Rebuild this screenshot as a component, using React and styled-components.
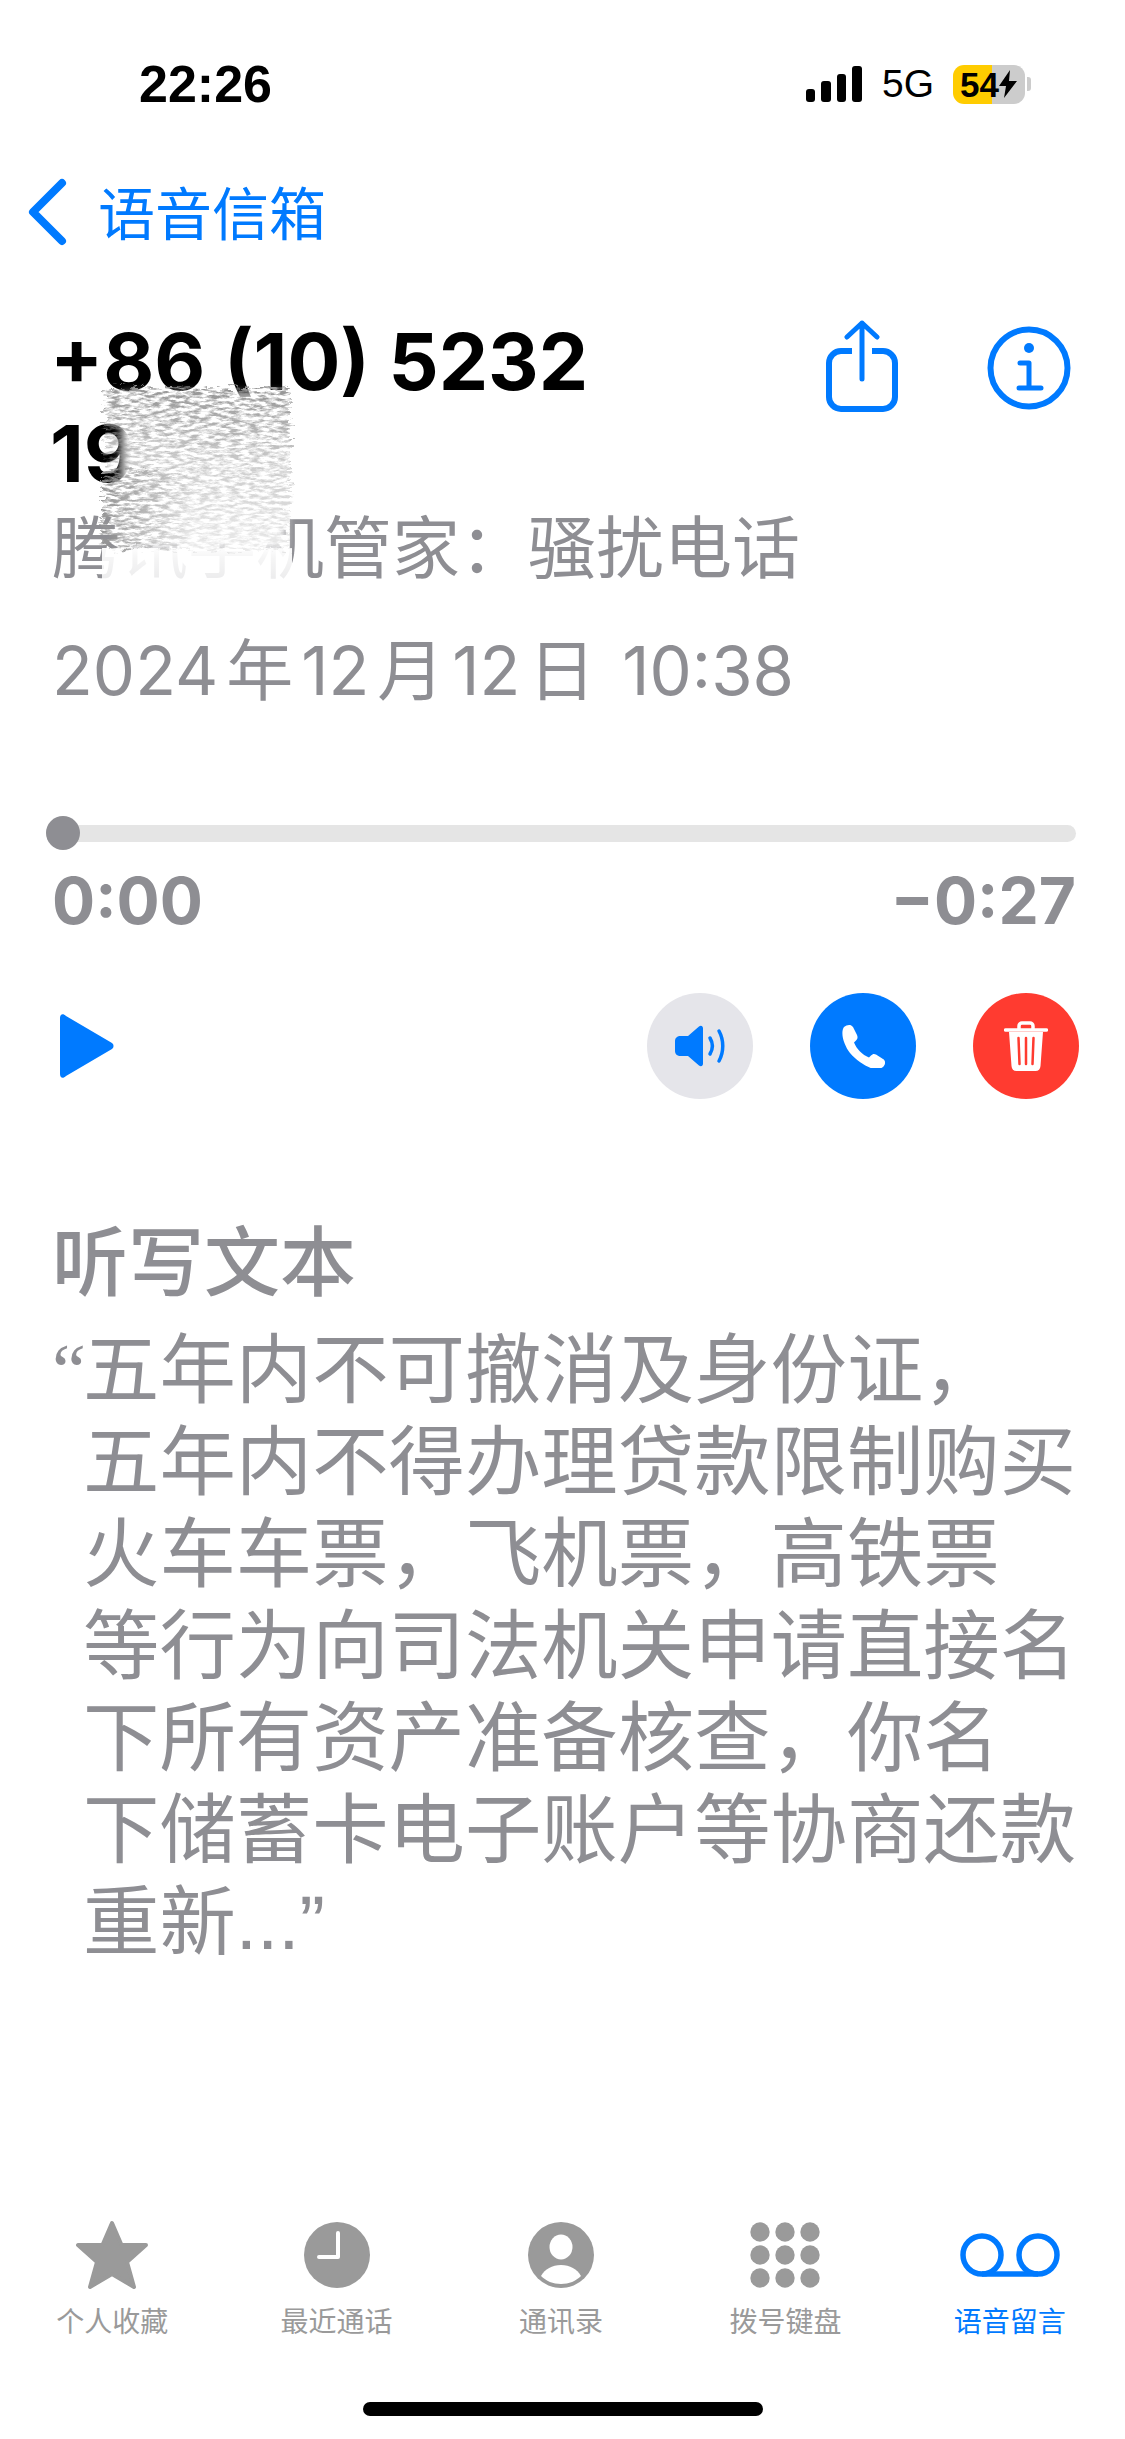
import styled, { createGlobalStyle } from "styled-components";

const GlobalStyle = createGlobalStyle`
    html, body {
        margin: 0;
        padding: 0;
        background: #fff;
    }
    body {
        font-family: "Inter", "Noto Sans CJK SC", sans-serif;
    }
`

const BLUE = "#007AFF";
const GRAY = "#8E8E93";
const CJK = `"Noto Sans CJK SC", sans-serif`;

const Screen = styled.div`
    width: 1125px;
    height: 2439px;
    display: flex;
    flex-direction: column;
    background: #fff;
    overflow: hidden;
    position: relative;
`

const StatusBar = styled.header`
    height: 40px;
    padding: 64px 94px 0 139px;
    display: flex;
    align-items: center;
    justify-content: space-between;
`

const Time = styled.span`
    font: 700 52px/40px "Liberation Sans", sans-serif;
    color: #000;
`

const StatusRight = styled.div`
    display: flex;
    align-items: center;
`

const NetworkLabel = styled.span`
    font: 400 39px/40px "Liberation Sans", sans-serif;
    margin: 0 19px 0 20px;
    color: #000;
`

const Battery = styled.div`
    width: 72px;
    height: 39px;
    border-radius: 11px;
    overflow: hidden;
    display: flex;
    align-items: center;
    background: linear-gradient(90deg, #FFCC00 0 54%, #CCCCCC 54% 100%);
    padding-left: 7px;
    box-sizing: border-box;
`

const BatteryNub = styled.div`
    width: 4px;
    height: 14px;
    margin-left: 2px;
    border-radius: 0 3px 3px 0;
    background: #CCCCCC;
`

const BatteryText = styled.span`
    font: 700 35px/39px "Liberation Sans", sans-serif;
    color: #000;
`

const NavBar = styled.nav`
    display: flex;
    align-items: center;
    gap: 30px;
    margin-top: 74px;
    padding-left: 27px;
    height: 68px;
`

const BackLabel = styled.span`
    font: 400 57px/68px ${CJK};
    color: ${BLUE};
    margin-bottom: 5px;
`

const Header = styled.section`
    display: flex;
    justify-content: space-between;
    align-items: flex-start;
    padding: 70px 54px 0 50px;
    position: relative;
`

const HeaderText = styled.div`
    display: flex;
    flex-direction: column;
`

const PhoneNumber = styled.h1`
    margin: 0;
    width: 600px;
    font: 700 78.500px/92px "Inter", sans-serif;
    color: #000;
`

const Subtitle = styled.p`
    margin: ${(p) => p.$top}px 0 0 2px;
    font: 400 ${(p) => p.$size}px/80px "Inter", ${CJK};
    color: ${GRAY};
    white-space: nowrap;
`

const DateUnit = styled.span`
    margin: 0 8px;
`

const HeaderActions = styled.div`
    display: flex;
    align-items: flex-start;
    gap: 89px;
    margin-top: 4px;
`

const InfoIcon = styled.svg`
    margin-top: 6px;
`

const Smudge = styled.svg`
    position: absolute;
    left: 60px;
    top: 134px;
    pointer-events: none;
`

const Player = styled.section`
    padding: 0 49px 0 46px;
    margin-top: 105px;
`

const Track = styled.div`
    height: 34px;
    display: flex;
    align-items: center;
    position: relative;
`

const TrackLine = styled.div`
    flex: 1;
    height: 17px;
    border-radius: 9px;
    background: #E5E5E5;
`

const Thumb = styled.div`
    position: absolute;
    left: 0;
    top: 0;
    width: 34px;
    height: 34px;
    border-radius: 50%;
    background: ${GRAY};
`

const TimeRow = styled.div`
    display: flex;
    justify-content: space-between;
    padding: 19px 0 0 6px;
    font: 700 64px/64px "Inter", sans-serif;
    color: ${GRAY};
`

const Controls = styled.div`
    display: flex;
    align-items: center;
    justify-content: space-between;
    margin: 60px -3px 0 14px;
`

const RoundButtons = styled.div`
    display: flex;
    gap: 57px;
`

const RoundButton = styled.div`
    width: 106px;
    height: 106px;
    border-radius: 50%;
    display: flex;
    align-items: center;
    justify-content: center;
    background: ${(p) => p.$bg};
`

const Transcript = styled.section`
    margin-top: 112px;
    padding: 0 30px 0 52px;
`

const TranscriptTitle = styled.h2`
    margin: 0 0 22px;
    font: 500 76px/92px ${CJK};
    color: ${GRAY};
`

const TranscriptBody = styled.p`
    margin: 0;
    padding-left: 31px;
    font: 400 76.400px/92px "Liberation Sans", ${CJK};
    color: ${GRAY};
    position: relative;
    white-space: nowrap;
`

const OpenQuote = styled.span`
    position: absolute;
    left: 0;
    top: 0;
    font-family: "Liberation Serif", serif;
`

const TabBar = styled.nav`
    position: absolute;
    left: 0;
    right: 3px;
    bottom: 103px;
    display: grid;
    grid-template-columns: repeat(5, 1fr);
`

const Tab = styled.div`
    display: flex;
    flex-direction: column;
    align-items: center;
    color: ${(p) => (p.$active ? BLUE : "#9A9A9A")};
`

const TabIconBox = styled.div`
    height: 72px;
    display: flex;
    align-items: center;
    justify-content: center;
`

const TabLabel = styled.span`
    margin-top: 13px;
    font: 400 28px/32px ${CJK};
`

const HomeBar = styled.div`
    position: absolute;
    left: 363px;
    bottom: 23px;
    width: 400px;
    height: 14px;
    border-radius: 7px;
    background: #000;
`

const tabs = [
    { label: "个人收藏", icon: <svg width="74" height="70" viewBox="0 0 74 70" fill="currentColor" stroke="currentColor" strokeWidth="4" strokeLinejoin="round"><path d="M37 3l9.500 22H71L52 42l7 25-22-13-22 13 7-25L3 25h24.500z" /></svg> },
    { label: "最近通话", icon: <svg width="68" height="68" viewBox="0 0 68 68"><circle cx="34" cy="34" r="33" fill="currentColor" /><path d="M35 12v24H16" fill="none" stroke="#fff" strokeWidth="4" strokeLinecap="round" strokeLinejoin="round" /></svg> },
    { label: "通讯录", icon: <svg width="68" height="68" viewBox="0 0 68 68"><circle cx="34" cy="34" r="33" fill="currentColor" /><ellipse cx="34" cy="26" rx="11.500" ry="12.500" fill="#fff" /><path d="M14 55c4-7 11-11 20-11s16 4 20 11c-5 5-12 8-20 8s-15-3-20-8z" fill="#fff" /></svg> },
    { label: "拨号键盘", icon: <svg width="70" height="66" viewBox="0 0 70 66" fill="currentColor">{[10, 35, 60].map((cx) => [10, 33, 56].map((cy) => <circle key={`${cx}-${cy}`} cx={cx} cy={cy} r="9.700" />))}</svg> },
    { label: "语音留言", active: true, icon: <svg width="100" height="44" viewBox="0 0 100 44" fill="none" stroke="currentColor" strokeWidth="5.500"><circle cx="22" cy="22" r="19" /><circle cx="78" cy="22" r="19" /><path d="M22 41h56" /></svg> },
];

const App = () => {
    return (
        <Screen>
            <GlobalStyle />
            <StatusBar>
                <Time>22:26</Time>
                <StatusRight>
                    <svg width="56" height="36" viewBox="0 0 56 36" fill="#000">
                        <rect x="0" y="23" width="9" height="13" rx="3" />
                        <rect x="15" y="15" width="10" height="21" rx="3" />
                        <rect x="31" y="8" width="9" height="28" rx="3" />
                        <rect x="46" y="0" width="10" height="36" rx="3" />
                    </svg>
                    <NetworkLabel>5G</NetworkLabel>
                    <Battery>
                        <BatteryText>54</BatteryText>
                        <svg width="18" height="28" viewBox="0 0 18 28" fill="#000">
                            <path d="M11 0 0 16h7L5 28l13-17h-8z" />
                        </svg>
                    </Battery>
                    <BatteryNub />
                </StatusRight>
            </StatusBar>
            <NavBar>
                <svg width="41" height="68" viewBox="0 0 41 68" fill="none" stroke={BLUE} strokeWidth="8" strokeLinecap="round" strokeLinejoin="round">
                    <path d="M35 5 6 34l29 29" />
                </svg>
                <BackLabel>语音信箱</BackLabel>
            </NavBar>
            <Header>
                <HeaderText>
                    <PhoneNumber>+86 (10) 5232 19</PhoneNumber>
                    <Subtitle $top={8} $size={68}>腾讯手机管家&#65306;骚扰电话</Subtitle>
                    <Subtitle $top={43} $size={67}>2024<DateUnit>年</DateUnit>12<DateUnit>月</DateUnit>12<DateUnit>日</DateUnit> 10:38</Subtitle>
                </HeaderText>
                <HeaderActions>
                    <svg width="72" height="92" viewBox="0 0 72 92" fill="none" stroke={BLUE} strokeWidth="5" strokeLinecap="round" strokeLinejoin="round">
                        <path d="M36 59V3M21 17 36 3l15 14" />
                        <path d="M26 31H15A12 12 0 0 0 3 43v34a12 12 0 0 0 12 12h42a12 12 0 0 0 12-12V43a12 12 0 0 0-12-12H46" strokeWidth="6" strokeLinecap="butt" />
                    </svg>
                    <InfoIcon width="84" height="84" viewBox="0 0 84 84" fill="none" stroke={BLUE}>
                        <circle cx="42" cy="42" r="38.500" strokeWidth="6" />
                        <circle cx="42" cy="22" r="5" fill={BLUE} stroke="none" />
                        <path d="M33 37h9v25M32 62h22" strokeWidth="5" strokeLinecap="round" strokeLinejoin="round" />
                    </InfoIcon>
                </HeaderActions>
                <Smudge width="260" height="240" viewBox="0 0 260 240">
                    <defs>
                        <filter id="blurEdge" x="-20%" y="-20%" width="140%" height="140%">
                            <feGaussianBlur stdDeviation="5" />
                        </filter>
                        <filter id="scribble" x="-10%" y="-10%" width="120%" height="120%">
                            <feTurbulence type="fractalNoise" baseFrequency="0.1 0.32" numOctaves="5" seed="7" result="noise" />
                            <feDisplacementMap in="SourceGraphic" in2="noise" scale="18" result="rough" />
                            <feColorMatrix in="noise" values="0 0 0 0 0.3  0 0 0 0 0.3  0 0 0 0 0.3  3.400 0 0 0 -1.300" result="grain" />
                            <feComposite in="grain" in2="rough" operator="in" />
                        </filter>
                        <linearGradient id="topBand" x1="0" y1="0" x2="0" y2="1">
                            <stop offset="0" stopColor="#000" stopOpacity="1" />
                            <stop offset="0.45" stopColor="#000" stopOpacity="0.5" />
                            <stop offset="1" stopColor="#000" stopOpacity="0.2" />
                        </linearGradient>
                        <linearGradient id="leftBand" x1="0" y1="0" x2="1" y2="0">
                            <stop offset="0" stopColor="#000" stopOpacity="1" />
                            <stop offset="1" stopColor="#000" stopOpacity="0" />
                        </linearGradient>
                        <linearGradient id="haze" x1="0" y1="0" x2="0" y2="1">
                            <stop offset="0" stopColor="#fff" stopOpacity="0.95" />
                            <stop offset="0.7" stopColor="#fff" stopOpacity="0.8" />
                            <stop offset="1" stopColor="#fff" stopOpacity="0" />
                        </linearGradient>
                    </defs>
                    <rect x="62" y="14" width="164" height="156" fill="#fff" filter="url(#blurEdge)" />
                    <rect x="42" y="168" width="190" height="58" fill="url(#haze)" />
                    <rect x="44" y="8" width="186" height="162" fill="url(#topBand)" filter="url(#scribble)" />
                    <rect x="42" y="90" width="90" height="78" fill="url(#leftBand)" filter="url(#scribble)" />
                </Smudge>
            </Header>
            <Player>
                <Track>
                    <TrackLine />
                    <Thumb />
                </Track>
                <TimeRow>
                    <span>0:00</span>
                    <span>−0:27</span>
                </TimeRow>
                <Controls>
                    <svg width="54" height="64" viewBox="0 0 54 64" fill={BLUE}>
                        <path d="M0 4c0-4 3-5 6-2l46 27c2 1.500 2 4.500 0 6L6 62c-3 3-6 2-6-2z" />
                    </svg>
                    <RoundButtons>
                        <RoundButton $bg="#E5E5EA">
                            <svg width="52" height="42" viewBox="0 0 52 42" fill="none" stroke={BLUE} strokeWidth="3.500" strokeLinecap="round">
                                <path d="M7 11h7L25 1.500c2-1.500 4-.5 4 2v35c0 2.500-2 3.500-4 2L14 31H7c-4 0-6-2-6-5V16c0-3 2-5 6-5z" fill={BLUE} stroke="none" />
                                <path d="M36 13c3 5 3 11 0 16" />
                                <path d="M45 6c5 9 5 21 0 30" />
                            </svg>
                        </RoundButton>
                        <RoundButton $bg={BLUE}>
                            <svg width="44" height="44" viewBox="0 0 44 44" fill="#fff">
                                <path d="M3 3C6 .5 10 0 12 3l4 8c1 2.500.5 4-1 5.500l-2 2c1.500 3.500 3.500 6.500 6 9 2.500 2.500 5.500 4.500 9 6l2-2c1.500-1.500 3-2 5-1l7 4.500c3 2 2.500 5.500 0 8-2.500 2-6 2.500-11 1.500C24 42 15 36 9 29 3 21-1 9 3 3z" />
                            </svg>
                        </RoundButton>
                        <RoundButton $bg="#FF3B30">
                            <svg width="44" height="50" viewBox="0 0 44 50" fill="none">
                                <path d="M15 8V5c0-2 1.500-3 3-3h8c1.500 0 3 1 3 3v3" stroke="#fff" strokeWidth="3.500" />
                                <path d="M1.500 9h41" stroke="#fff" strokeWidth="3.500" strokeLinecap="round" />
                                <path d="M5 11h34l-2.500 34c-.2 3-2 5-5 5h-19c-3 0-4.800-2-5-5z" fill="#fff" />
                                <path d="M14.500 17l1 26M22 17v26M29.500 17l-1 26" stroke="#FF3B30" strokeWidth="2.500" strokeLinecap="round" />
                            </svg>
                        </RoundButton>
                    </RoundButtons>
                </Controls>
            </Player>
            <Transcript>
                <TranscriptTitle>听写文本</TranscriptTitle>
                <TranscriptBody>
                    <OpenQuote>“</OpenQuote>
                    五年内不可撤消及身份证&#65292;<br />
                    五年内不得办理贷款限制购买<br />
                    火车车票&#65292;飞机票&#65292;高铁票<br />
                    等行为向司法机关申请直接名<br />
                    下所有资产准备核查&#65292;你名<br />
                    下储蓄卡电子账户等协商还款<br />
                    重新...”
                </TranscriptBody>
            </Transcript>
            <TabBar>
                {tabs.map((t) => (
                    <Tab key={t.label} $active={t.active}>
                        <TabIconBox>{t.icon}</TabIconBox>
                        <TabLabel>{t.label}</TabLabel>
                    </Tab>
                ))}
            </TabBar>
            <HomeBar />
        </Screen>
    )
}

export default App;
